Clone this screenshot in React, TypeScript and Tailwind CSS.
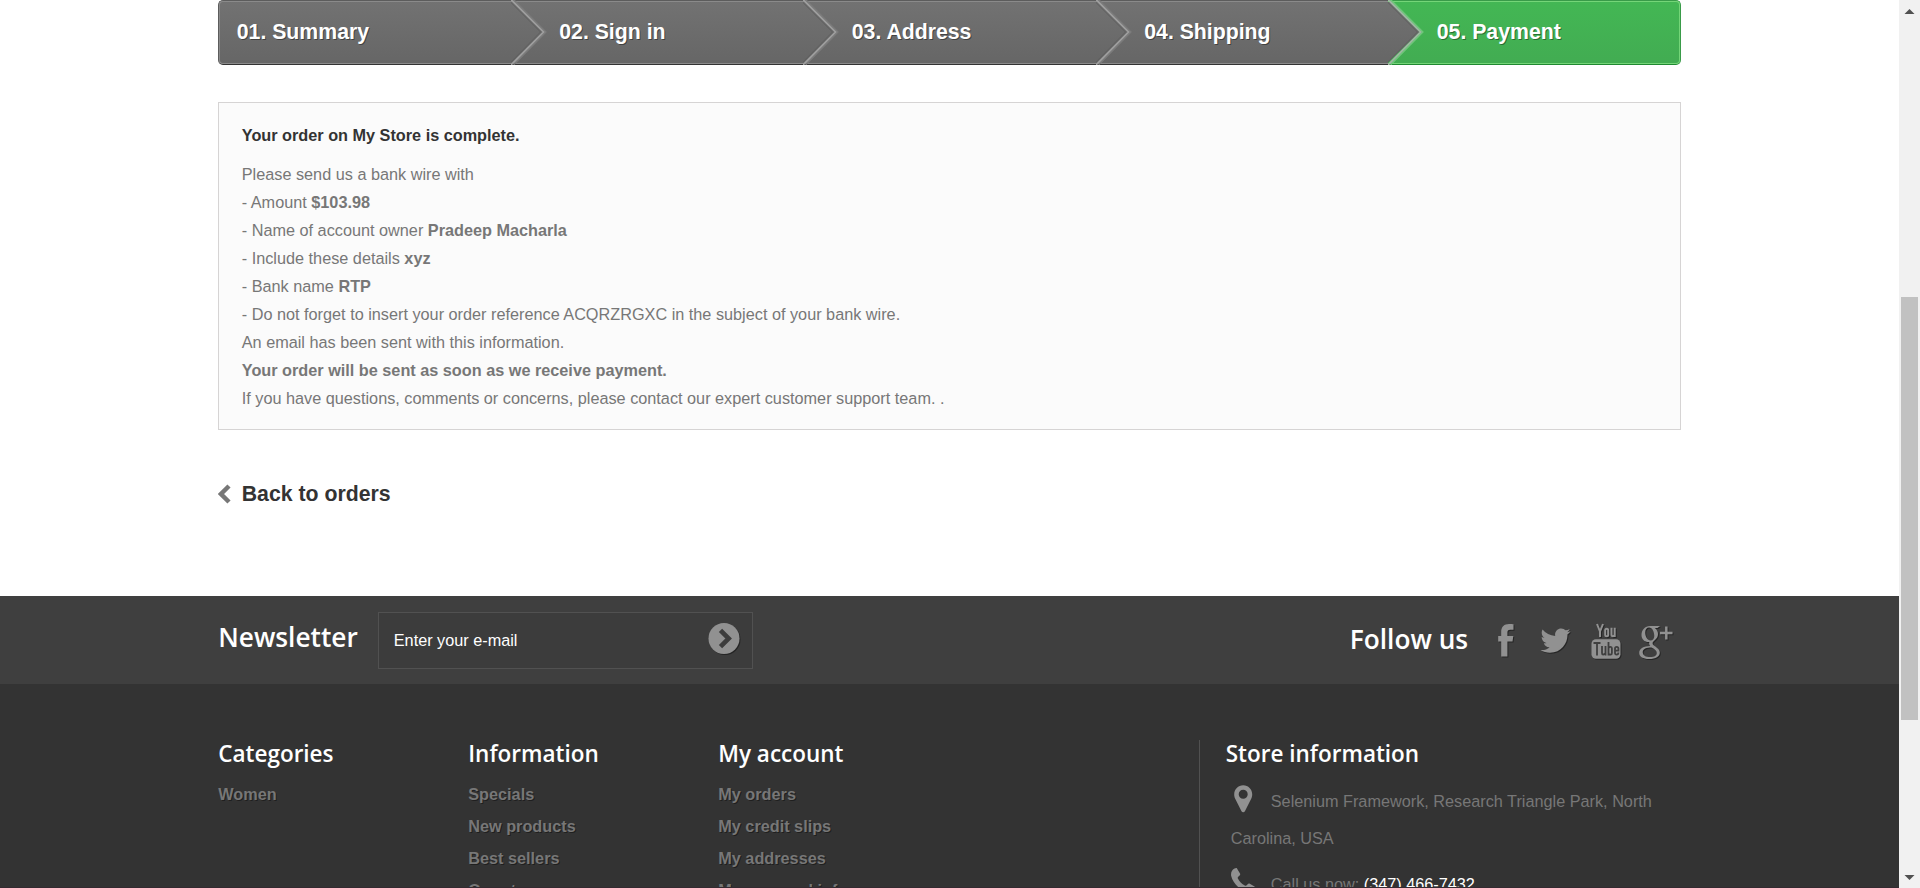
import React from "react";

const steps = ["01. Summary", "02. Sign in", "03. Address", "04. Shipping"];

const shadow = "drop-shadow-[1px_1px_0px_rgba(0,0,0,0.4)]";

function StepArrow({ green = false }: { green?: boolean }) {
  return (
    <svg className="absolute left-0 top-0" width="40" height="65" viewBox="1.5 0 40 65" fill="none">
      <defs>
        <linearGradient id="stepFill" x1="0" y1="0" x2="0" y2="1">
          <stop offset="0" stopColor="#727272" />
          <stop offset="1" stopColor="#666666" />
        </linearGradient>
      </defs>
      <path d="M0 2H3L33 32L1 63H0Z" fill="url(#stepFill)" />
      <path d="M4 0L36 32L4 64.500" stroke={green ? "#6fc57b" : "#7b7b7b"} strokeWidth="2" />
      <path d="M-1 0L31 32L-1 64.500" stroke="#5f5f5f" strokeWidth="1" />
      <path d="M1.500 -0.500L34 32L1.500 65" stroke={green ? "#a5b5a7" : "#a0a0a0"} strokeWidth="1.600" />
    </svg>
  );
}

function Steps() {
  return (
    <ol className="flex h-[65px] text-[21.25px] leading-[52px] font-bold text-white">
      {steps.map((label, i) => (
        <li
          key={label}
          className={
            "relative h-full w-[292.5px] border-t border-b border-t-[#5c5c5c] border-b-[#333333] bg-linear-to-b from-[#727272] to-[#666666] " +
            (i === 0 ? "rounded-l-[5px] border-l border-l-[#5c5c5c]" : "")
          }
        >
          <div
            className={
              "h-full border-t border-b border-[#8a8a8a] pt-[4px] [text-shadow:1px_1px_0_rgba(0,0,0,0.4)] " +
              (i === 0 ? "rounded-l-[4px] border-l pl-[16.5px]" : "pl-[48.500px]")
            }
          >
            {label}
          </div>
          {i > 0 && (
            <div className="absolute -top-px left-0">
              <StepArrow />
            </div>
          )}
        </li>
      ))}
      <li className="relative h-full w-[292.5px] rounded-r-[5px] border border-l-0 border-t-[#399b49] border-r-[#399b49] border-b-[#208931] bg-linear-to-b from-[#43b754] to-[#42ac52]">
        <div className="h-full rounded-r-[4px] border border-l-0 border-[#74d578] pt-[4px] pl-[48.500px] [text-shadow:1px_1px_0_rgba(0,0,0,0.4)]">
          05. Payment
        </div>
        <div className="absolute -top-px left-0">
          <StepArrow green />
        </div>
      </li>
    </ol>
  );
}

function OrderBox() {
  return (
    <section className="mt-[37px] h-[328px] border border-[#d6d4d4] bg-[#fbfbfb] px-[22.5px] pt-[18px] text-[16.25px] leading-[28px] text-[#777777]">
      <p className="mb-[11px] font-bold text-[#333333]">Your order on My Store is complete.</p>
      <p>Please send us a bank wire with</p>
      <p>- Amount <b>$103.98</b></p>
      <p>- Name of account owner <b>Pradeep Macharla</b></p>
      <p>- Include these details <b>xyz</b></p>
      <p>- Bank name <b>RTP</b></p>
      <p>- Do not forget to insert your order reference ACQRZRGXC in the subject of your bank wire.</p>
      <p>An email has been sent with this information.</p>
      <p><b>Your order will be sent as soon as we receive payment.</b></p>
      <p>If you have questions, comments or concerns, please contact our expert customer support team. .</p>
    </section>
  );
}

function SocialIcons() {
  return (
    <div className="flex text-[#919191]">
      <svg className={shadow} width="40" height="44" viewBox="1491 618 40 44" fill="currentColor">
        <path d="M1513.500 623.200V628.700H1510.300C1507.900 628.700 1507.400 629.900 1507.400 631.500V634.900H1513.300L1512.500 640.500H1507.400V655.500H1501.200V640.500H1498.200V634.900H1501.200V630.700C1501.200 625.600 1504.400 622.900 1509 622.900C1511.200 622.900 1513 623.100 1513.500 623.200Z" />
      </svg>
      <svg className={shadow} width="50" height="44" viewBox="1531 618 50 44" fill="currentColor">
        <g transform="translate(1540.500 624.600) scale(1.250)">
          <path d="M23.954 4.569c-.885.389-1.830.654-2.825.775 1.014-.611 1.794-1.574 2.163-2.723-.951.555-2.005.959-3.127 1.184-.896-.959-2.173-1.559-3.591-1.559-2.717 0-4.920 2.203-4.920 4.917 0 .390.045.765.127 1.124C7.691 8.094 4.066 6.130 1.640 3.161c-.427.722-.666 1.561-.666 2.475 0 1.710.870 3.213 2.188 4.096-.807-.026-1.566-.248-2.228-.616v.061c0 2.385 1.693 4.374 3.946 4.827-.413.111-.849.171-1.296.171-.314 0-.615-.030-.916-.086.631 1.953 2.445 3.377 4.604 3.417-1.680 1.319-3.809 2.105-6.102 2.105-.390 0-.779-.023-1.170-.067 2.189 1.394 4.768 2.209 7.557 2.209 9.054 0 13.999-7.496 13.999-13.986 0-.209 0-.420-.015-.630.961-.689 1.800-1.560 2.460-2.548l-.047-.020z" />
        </g>
      </svg>
      <svg className={shadow} width="50" height="44" viewBox="1581 618 50 44" fill="none">
        <g stroke="currentColor" strokeWidth="2">
          <path d="M1597 623L1600 630.500V636M1603 623L1600 630.500" />
          <rect x="1605.200" y="627.700" width="3" height="7.500" rx="1.500" />
          <path d="M1611.500 626.700V633.500Q1611.500 635.200 1612.900 635.200Q1614 635 1614.700 634M1614.700 626.700V636" />
        </g>
        <rect x="1591.500" y="638.300" width="29" height="19.500" rx="4.500" fill="currentColor" />
        <g stroke="#3f3f3f" strokeWidth="1.800">
          <path d="M1593.500 642H1600.500M1597 642V654.500" />
          <path d="M1602 645V652Q1602 653.600 1603.200 653.600Q1604.500 653.300 1605.500 652.200M1605.500 645V654.500" />
          <path d="M1608.500 641V654.500M1608.500 647Q1609.600 645.700 1610.700 645.900Q1611.900 646 1611.900 647.500V652Q1611.900 653.600 1610.500 653.600Q1609.600 653.600 1608.500 652.500" />
          <path d="M1615 649.700H1618.400V647.600Q1618.400 645.800 1616.700 645.800Q1615 645.800 1615 647.600V651.800Q1615 653.600 1616.700 653.600Q1618.400 653.600 1618.400 651.500" />
        </g>
      </svg>
      <svg className={shadow} width="50" height="44" viewBox="1631 618 50 44" fill="none" stroke="currentColor">
        <path fill="currentColor" stroke="none" fillRule="evenodd" d="M1650 625H1660L1657.500 627H1654.800C1657 628.500 1658 630.500 1658 633C1658 636 1656.500 637.800 1654.700 639.300C1653 640.700 1652.600 641.300 1652.600 642.400C1652.600 643.500 1653.700 644.300 1655.400 645.600C1658 647.500 1659.800 649.300 1659.800 651.500C1659.800 655.500 1655.800 658 1649 658C1643 658 1639.200 655.800 1639.200 652C1639.200 647.500 1644 645.300 1650.200 645.100C1649.200 643.900 1648.800 642.500 1649.400 641.100C1644.500 641.400 1641.500 638.200 1641.500 634C1641.500 629 1645 625 1650 625ZM1649 626.600C1646.600 626.600 1645.200 628.600 1645.200 631.600C1645.200 635.800 1647.500 639.500 1650.500 639.500C1652.900 639.500 1654.300 637.700 1654.300 635C1654.300 631 1652.300 626.600 1649 626.600ZM1651.500 646.600C1646.500 646.600 1642.700 648 1642.700 651.200C1642.700 654.200 1645.600 656.100 1650.200 656.100C1654.600 656.100 1656.800 654.400 1656.800 652C1656.800 650 1655 648.500 1651.500 646.600Z" />
        <path strokeWidth="2.500" d="M1660 632H1672.500M1666.300 625.500V638.500" />
      </svg>
    </div>
  );
}

function NewsletterBar() {
  return (
    <div className="h-[88px] bg-[#3f3f3f]">
      <div className="mx-auto flex w-[1462.5px] text-white">
        <h4 className="w-[160px] pt-[19px] font-['Open_Sans'] text-[26.25px] leading-[44px] font-semibold">Newsletter</h4>
        <div className="mt-4 flex h-[57px] w-[375px] justify-between border border-[#515151] bg-[#3c3c3c] pr-[12px] pl-[14.5px]">
          <span className="pt-[13px] text-[16.25px] leading-[28px]">Enter your e-mail</span>
          <svg className={"mt-[10px] " + shadow} width="32" height="32" viewBox="0 0 32 32">
            <circle cx="16" cy="15.500" r="15.500" fill="#919191" />
            <path d="M12.500 7.300L20.700 15.500L12.500 23.700" fill="none" stroke="#3c3c3c" strokeWidth="4.600" />
          </svg>
        </div>
        <h4 className="ml-auto w-[141px] pt-[21px] font-['Open_Sans'] text-[26.25px] leading-[44px] font-semibold">Follow us</h4>
        <div className="w-[190px] pt-[23px]">
          <SocialIcons />
        </div>
      </div>
    </div>
  );
}

function LinkColumn({ title, links }: { title: string; links: string[] }) {
  return (
    <div className="w-[250px]">
      <h4 className="font-['Open_Sans'] text-[22.5px] leading-[28px] font-semibold text-white">{title}</h4>
      <ul className="pt-[10px] text-[16.25px] leading-[32px] font-bold text-[#777777] [text-shadow:1px_1px_0_rgba(0,0,0,0.4)]">
        {links.map((l) => (
          <li key={l}>{l}</li>
        ))}
      </ul>
    </div>
  );
}

function Footer() {
  return (
    <footer className="h-[203px] overflow-hidden bg-[#333333] pt-[56px]">
      <div className="mx-auto flex w-[1462.5px]">
        <LinkColumn title="Categories" links={["Women"]} />
        <LinkColumn title="Information" links={["Specials", "New products", "Best sellers", "Our stores"]} />
        <LinkColumn title="My account" links={["My orders", "My credit slips", "My addresses", "My personal info"]} />
        <div className="ml-auto h-[200px] w-[482px] border-l border-[#515151] pl-[26px] text-[16.25px] text-[#777777]">
          <h4 className="font-['Open_Sans'] text-[22.5px] leading-[28px] font-semibold text-white">Store information</h4>
          <div className="flex pt-[14px] pl-[5px] leading-[37px]">
            <svg className="mt-[3px] mr-[-24px] shrink-0" width="24" height="44" viewBox="1231 785 24 44">
              <path fillRule="evenodd" fill="#919191" d="M1243.200 785.200C1248.300 785.200 1252.200 789.200 1252.200 794.200C1252.200 796 1251.900 797.200 1251.200 798.700L1244.900 811.200C1244.200 812.500 1242.200 812.500 1241.500 811.200L1235.200 798.700C1234.500 797.200 1234.200 796 1234.200 794.200C1234.200 789.200 1238.200 785.200 1243.200 785.200ZM1243.200 789.700A4.500 4.500 0 1 0 1243.200 798.700A4.500 4.500 0 1 0 1243.200 789.700Z" />
            </svg>
            <p className="pt-[1px] indent-[40px]">
              Selenium Framework, Research Triangle Park, North<br />Carolina, USA
            </p>
          </div>
          <div className="flex pt-[9px] pl-[5px] leading-[37px]">
            <svg className="mt-[2px] mr-[16px] shrink-0" width="24" height="26" viewBox="0 0 24 26">
              <path fill="#919191" d="M3.500 0.600C4.600 0 5.600 -0.200 6 0.500L9 5.500C9.600 6.600 8.900 7.300 7.800 8.200C6.700 9.200 6.400 9.600 7 10.700C8.800 13.800 10.800 15.800 13.800 17.600C14.800 18.100 15.200 17.900 16.200 16.800C17.100 15.700 17.800 15.100 18.800 15.700L23.500 18.500C24.200 19 24 20 23.500 21.200C22.600 23.500 19.500 24.600 16.800 24.200C9 22.500 1.800 15 0.200 8C-0.400 5 0.800 2 3.500 0.600Z" />
            </svg>
            <p>Call us now: <span className="text-white">(347) 466-7432</span></p>
          </div>
        </div>
      </div>
    </footer>
  );
}

function Scrollbar() {
  return (
    <div className="flex h-full w-[21px] flex-col items-center bg-[#f1f1f1]">
      <svg className="mt-[9px]" width="11" height="6" viewBox="0 0 11 6">
        <path d="M5.500 0L10.500 5H0.500Z" fill="#505050" />
      </svg>
      <div className="mt-[282px] h-[423px] w-[17px] bg-[#c1c1c1]" />
      <svg className="mt-auto mb-[8px]" width="11" height="6" viewBox="0 0 11 6">
        <path d="M5.500 6L10.500 1H0.500Z" fill="#505050" />
      </svg>
    </div>
  );
}

export default function App() {
  return (
    <div className="flex h-[888px] w-[1920px] overflow-hidden bg-white font-['Liberation_Sans',Arial,sans-serif]">
      <div className="flex h-full w-[1899px] flex-col">
        <main className="mx-auto h-[596px] w-[1462.5px]">
          <Steps />
          <OrderBox />
          <div className="mt-[46px] flex items-center text-[21.25px] leading-[36px] font-bold text-[#333333]">
            <svg className="mr-[9.5px]" width="14" height="20" viewBox="0 0 14 20">
              <path d="M11 2L3 10L11 18" fill="none" stroke="#777777" strokeWidth="4.500" />
            </svg>
            Back to orders
          </div>
        </main>
        <NewsletterBar />
        <Footer />
        <div className="h-px bg-[#342a30]" />
      </div>
      <Scrollbar />
    </div>
  );
}
